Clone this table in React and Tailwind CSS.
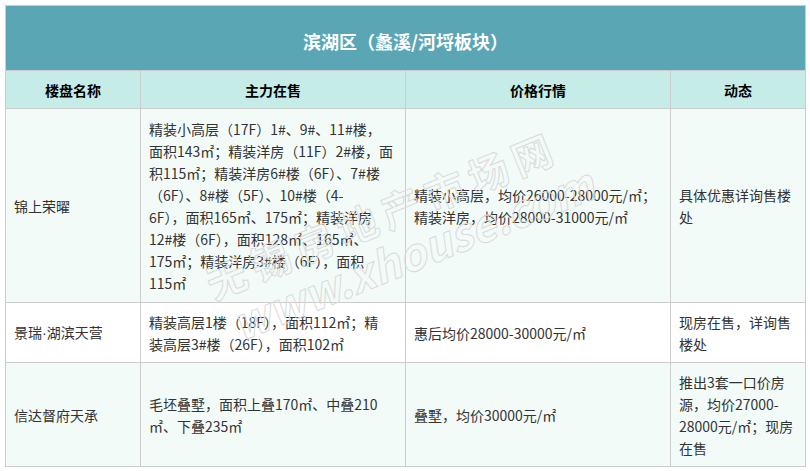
const rows = [
  {
    name: "锦上荣曜",
    main: [
      "精装小高层（17F）1#、9#、11#楼，",
      "面积143㎡；精装洋房（11F）2#楼，面",
      "积115㎡；精装洋房6#楼（6F）、7#楼",
      "（6F）、8#楼（5F）、10#楼（4-",
      "6F），面积165㎡、175㎡；精装洋房",
      "12#楼（6F），面积128㎡、165㎡、",
      "175㎡；精装洋房3#楼（6F），面积",
      "115㎡",
    ],
    price: ["精装小高层，均价26000-28000元/㎡；", "精装洋房，均价28000-31000元/㎡"],
    news: ["具体优惠详询售楼", "处"],
    bg: "bg-[#f3fbf9]",
    h: "h-[194px]",
  },
  {
    name: (
      <>
        景瑞<span style={{ fontFamily: '"Liberation Sans", sans-serif' }}>·</span>湖滨天营
      </>
    ),
    main: ["精装高层1楼（18F），面积112㎡；精", "装高层3#楼（26F），面积102㎡"],
    price: ["惠后均价28000-30000元/㎡"],
    news: ["现房在售，详询售", "楼处"],
    bg: "bg-white",
    h: "h-[60px]",
  },
  {
    name: "信达督府天承",
    main: ["毛坯叠墅，面积上叠170㎡、中叠210", "㎡、下叠235㎡"],
    price: ["叠墅，均价30000元/㎡"],
    news: ["推出3套一口价房", "源，均价27000-", "28000元/㎡；现房", "在售"],
    bg: "bg-[#f3fbf9]",
    h: "h-[104px]",
  },
];

const Lines = ({ lines }) => (
  <>
    {lines.map((l, i) => (
      <div key={i} className="whitespace-nowrap">
        {l}
      </div>
    ))}
  </>
);

const App = () => {
  return (
    <div
      className="relative w-[810px] h-[471px] bg-white p-[5px] overflow-hidden"
      style={{ fontFamily: '"Noto Sans CJK SC", "Noto Sans", sans-serif' }}
    >
      <table className="w-[800px] table-fixed border-collapse text-[14px] leading-[22px] text-[#333]">
        <colgroup>
          <col className="w-[135px]" />
          <col className="w-[265px]" />
          <col className="w-[265px]" />
          <col className="w-[135px]" />
        </colgroup>
        <thead>
          <tr className="h-[65px] bg-[#5ba6b5]">
            <th colSpan={4} className="border border-[#cccccc] text-[18px] font-bold text-white text-center pt-[6px]">
              滨湖区（蠡溪/河埒板块）
            </th>
          </tr>
          <tr className="h-[38px] bg-[#c6ece7]">
            {["楼盘名称", "主力在售", "价格行情", "动态"].map((t) => (
              <th key={t} className="border border-[#cccccc] font-bold text-black text-center">
                {t}
              </th>
            ))}
          </tr>
        </thead>
        <tbody>
          {rows.map((r, i) => (
            <tr key={i} className={`${r.h} ${r.bg}`}>
              <td className="border border-[#cccccc] px-2 align-middle">{r.name}</td>
              <td className="border border-[#cccccc] px-2 align-middle">
                <Lines lines={r.main} />
              </td>
              <td className="border border-[#cccccc] px-2 align-middle">
                <Lines lines={r.price} />
              </td>
              <td className="border border-[#cccccc] px-2 align-middle">
                <Lines lines={r.news} />
              </td>
            </tr>
          ))}
        </tbody>
      </table>

      {/* watermark */}
      <div className="pointer-events-none absolute left-[382px] top-[214px] -translate-x-1/2 -translate-y-1/2 rotate-[-22deg] whitespace-nowrap text-[40px] font-bold tracking-[7px] text-transparent [-webkit-text-stroke:1px_#dadada]">
        无锡房地产市场网
      </div>
      <div className="pointer-events-none absolute left-[412px] top-[252px] -translate-x-1/2 -translate-y-1/2 rotate-[-22deg] whitespace-nowrap text-[44px] font-bold italic text-transparent [-webkit-text-stroke:1px_#dadada]">
        www.xhouse.com
      </div>
    </div>
  );
};

export default App;
